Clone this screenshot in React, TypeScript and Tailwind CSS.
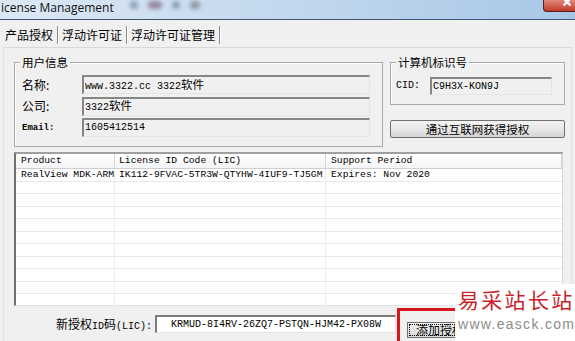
import type { ReactNode } from "react";

const cjk = "font-['Noto_Sans_CJK_SC',sans-serif]";
const mono = "font-['Liberation_Mono','Noto_Sans_CJK_SC',monospace]";

function TitleBar() {
  return (
    <div className="flex h-[20px] items-start border-b border-[#3d5676] bg-linear-to-r from-[#dce8f4] via-[#c3d8ee] to-[#a8c7e7]">
      <span className="pl-[1px] font-['Open_Sans',sans-serif] text-[12px] leading-[15px] text-[#111]">
        icense Management
      </span>
      <div className="ml-[16px] mt-[1px] flex gap-[10px] opacity-60 blur-[2px]">
        <div className="h-[8px] w-[8px] rounded-full bg-[#5d6f88]" />
        <div className="h-[8px] w-[14px] rounded-full bg-[#6e4f68]" />
        <div className="h-[8px] w-[8px] rounded-full bg-[#5d6f88]" />
        <div className="h-[8px] w-[10px] rounded-full bg-[#6e6070]" />
      </div>
      <div className="ml-auto flex h-[12px] w-[32px] justify-start overflow-hidden rounded-bl-[4px] border-b border-l border-[#5c1f17] bg-linear-to-b from-[#e0887a] to-[#c0392b] pl-[18px]">
        <svg width="10" height="10" viewBox="0 0 10 10" className="-mt-[3px]">
          <path d="M1.5 1.5 L8.5 8.5 M8.5 1.5 L1.5 8.5" stroke="#fff" strokeWidth="2.2" />
        </svg>
      </div>
    </div>
  );
}

function Tabs() {
  const tabs = ["产品授权", "浮动许可证", "浮动许可证管理"];
  return (
    <div className={`flex h-[27px] items-end pb-[3px] pl-[5px] ${cjk} text-[12px] leading-[16px]`}>
      {tabs.map((t) => (
        <div key={t} className="flex items-center">
          <span>{t}</span>
          <span className="ml-[4px] mr-[3px] h-[18px] w-[2px] border-l border-r border-l-[#8a8a8a] border-r-white" />
        </div>
      ))}
    </div>
  );
}

function Field({ className, children }: { className: string; children?: ReactNode }) {
  return (
    <div
      className={`flex items-center border-t-2 border-l-2 border-t-[#868686] border-l-[#868686] border-b border-r border-b-[#e6e6e6] border-r-[#e2e2e2] pl-[1px] ${mono} text-[10px] leading-[14px] ${className}`}
    >
      <span className="whitespace-nowrap">{children}</span>
    </div>
  );
}

function Group({ title, className, children }: { title: string; className: string; children: ReactNode }) {
  return (
    <div className={`relative border border-[#a9a9a9] shadow-[inset_1px_1px_0_#fff] ${className}`}>
      <span className={`absolute -top-[9px] left-[5px] bg-[#f0f0f0] px-[2px] ${cjk} text-[11.5px] leading-[16px]`}>
        {title}
      </span>
      {children}
    </div>
  );
}

const rows = Array.from({ length: 11 });

export default function App() {
  return (
    <div className="relative h-[341px] w-[575px] overflow-hidden bg-[#f0f0f0] text-black">
      <TitleBar />
      <Tabs />

      <div className="mx-[3px] h-[300px] border-t border-l border-r border-t-[#d9d9d9] border-l-[#e3e3e3] border-r-[#e3e3e3] pl-[10px] pr-[6px] pt-[14px]">
        <div className="flex gap-[7px]">
          <Group title="用户信息" className="w-[369px] pb-[9px] pl-[7px] pt-[12px]">
            <div className="flex flex-col gap-[2.5px]">
              <div className="flex h-[19px] items-center">
                <span className={`w-[60px] ${cjk} text-[12px] leading-[16px]`}>名称:</span>
                <Field className="h-[19px] w-[288px]">
                  www.3322.cc 3322<span className={`${cjk} text-[11.5px]`}>软件</span>
                </Field>
              </div>
              <div className="flex h-[19px] items-center">
                <span className={`w-[60px] ${cjk} text-[12px] leading-[16px]`}>公司:</span>
                <Field className="h-[19px] w-[288px]">
                  3322<span className={`${cjk} text-[11.5px]`}>软件</span>
                </Field>
              </div>
              <div className="flex h-[19px] items-center">
                <span className={`w-[60px] ${mono} text-[9px] font-bold leading-[12px]`}>Email:</span>
                <Field className="h-[19px] w-[288px]">1605412514</Field>
              </div>
            </div>
          </Group>

          <div className="flex w-[175px] flex-col">
            <Group title="计算机标识号" className="h-[43px] pl-[5px] pt-[14px]">
              <div className="flex h-[18px] items-center">
                <span className={`w-[34px] ${mono} text-[10px] leading-[12px]`}>CID:</span>
                <Field className="h-[18px] w-[122px]">C9H3X-KON9J</Field>
              </div>
            </Group>
            <button
              className={`mt-[15px] h-[18px] w-[175px] rounded-[2px] border border-[#707070] bg-linear-to-b from-[#f4f4f4] via-[#e8e8e8] to-[#d4d4d4] ${cjk} text-[11.5px] leading-[14px]`}
            >
              通过互联网获得授权
            </button>
          </div>
        </div>

        <div
          className={`mr-[2px] mt-[5px] h-[154px] overflow-hidden border-t-2 border-l-2 border-t-[#a0a0a0] border-l-[#707070] border-b border-r border-b-[#e3e3e3] border-r-[#d8d8d8] bg-white ${mono} text-[9.7px]`}
        >
          <div className="flex h-[15px] border-b border-[#cfcfcf] bg-linear-to-b from-white to-[#f3f4f6] leading-[14px]">
            <div className="w-[99px] border-r border-[#d5d5d5] pl-[5px]">Product</div>
            <div className="w-[211px] border-r border-[#d5d5d5] pl-[4px]">License ID Code (LIC)</div>
            <div className="flex-1 border-r border-[#d5d5d5] pl-[5px]">Support Period</div>
          </div>
          {rows.map((_, i) => (
            <div key={i} className="flex h-[12.5px] border-b border-[#e9e9e9] leading-[12px]">
              <div className="w-[99px] border-r border-[#ececec] pl-[5px]">{i === 0 ? "RealView MDK-ARM" : ""}</div>
              <div className="w-[211px] border-r border-[#ececec] pl-[4px]">
                {i === 0 ? "IK112-9FVAC-5TR3W-QTYHW-4IUF9-TJ5GM" : ""}
              </div>
              <div className="flex-1 pl-[5px]">{i === 0 ? "Expires: Nov 2020" : ""}</div>
            </div>
          ))}
        </div>

        <div className="mt-[2px] flex items-start">
          <span className={`mt-[8px] w-[138px] whitespace-nowrap text-right ${mono} text-[10px] leading-[16px]`}>
            <span className={`${cjk} text-[12px]`}>新授权</span>ID<span className={`${cjk} text-[12px]`}>码</span>(LIC):
          </span>
          <div
            className={`ml-[3px] mt-[7px] flex h-[18px] w-[241px] items-center justify-center border-t-2 border-l-2 border-t-[#7c7c7c] border-l-[#7c7c7c] border-b border-r border-b-[#e3e3e3] border-r-[#e3e3e3] bg-white ${mono} text-[10px] leading-[12px]`}
          >
            KRMUD-8I4RV-26ZQ7-PSTQN-HJM42-PX08W
          </div>
          <div className="ml-[1px] h-[40px] w-[90px] border-[3px] border-[#d8141c] pl-[7px] pt-[6px]">
            <button
              className={`h-[16px] w-[66px] border border-[#707070] bg-linear-to-b from-[#f4f4f4] to-[#d8d8d8] outline-1 outline-dotted -outline-offset-[3px] outline-black ${cjk} text-[12px] leading-[14px]`}
            >
              添加授权
            </button>
          </div>
        </div>
      </div>

      <div className="absolute bottom-0 right-0 flex h-[57px] w-[120px] flex-col bg-white pl-[3px] pt-[3px]">
        <span className={`${cjk} text-[21px] leading-[24px] tracking-[2.3px] text-[#c8232a]`}>易采站长站</span>
        <span className="mt-[5px] font-['Liberation_Sans',sans-serif] text-[14px] leading-[16px] tracking-[1.3px] text-[#8c8c8c]">
          www.easck.com
        </span>
      </div>
    </div>
  );
}
